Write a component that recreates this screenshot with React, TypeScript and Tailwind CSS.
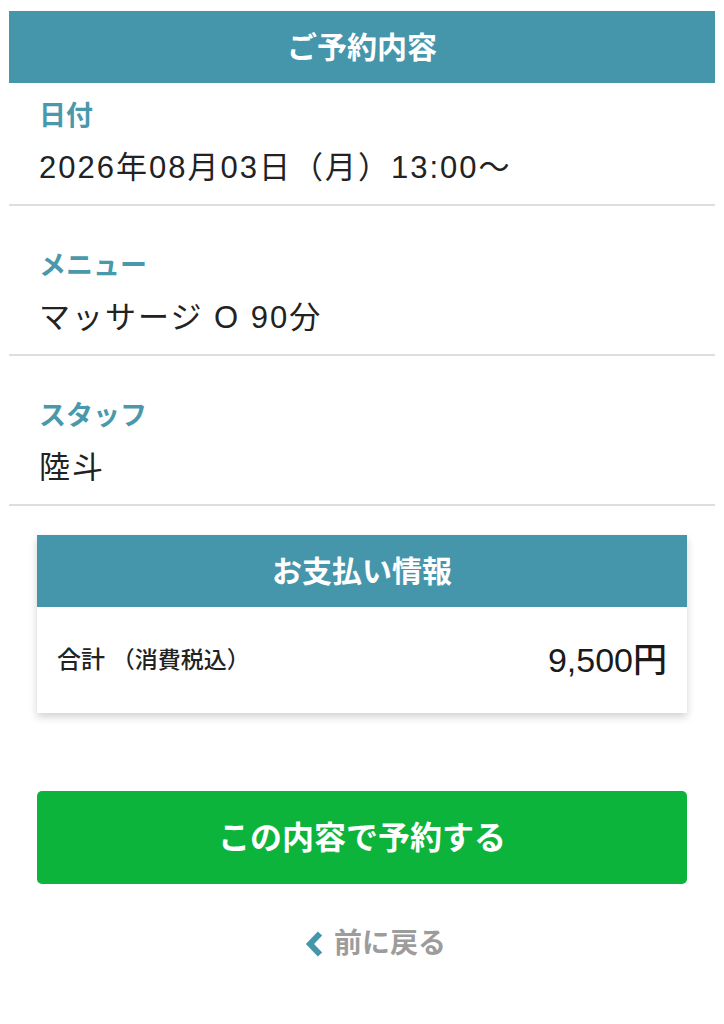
import React from 'react';

const font = { fontFamily: '"Liberation Sans", "Noto Sans CJK JP", sans-serif' };

interface RowProps {
  label: string;
  value: string;
  first?: boolean;
}

const DetailRow: React.FC<RowProps> = ({ label, value, first = false }) => (
  <div className={`border-b-2 border-[#dedede] px-[30px] pb-[14px] ${first ? 'pt-[15px]' : 'pt-[42px]'}`}>
    <div className="text-[27px] leading-[36px] font-bold text-[#4a98ac]">{label}</div>
    <div className="mt-[12px] text-[31px] leading-[44px] tracking-[2px] text-[#222]">{value}</div>
  </div>
);

const App: React.FC = () => {
  return (
    <div className="min-h-[1024px] w-full bg-white pt-[11px]" style={font}>
      <div className="mx-[9px]">
        <div className="flex h-[72px] items-center justify-center bg-[#4596ab] text-[30px] font-bold text-white">
          ご予約内容
        </div>
        <DetailRow first label="日付" value="2026年08月03日（月）13:00〜" />
        <DetailRow label="メニュー" value="マッサージ O 90分" />
        <DetailRow label="スタッフ" value="陸斗" />
      </div>

      <div className="mx-[37px] mt-[29px] shadow-[0_4px_8px_rgba(0,0,0,0.18)]">
        <div className="flex h-[72px] items-center justify-center bg-[#4596ab] text-[30px] font-bold text-white">
          お支払い情報
        </div>
        <div className="flex h-[106px] items-center justify-between bg-white px-[20px]">
          <div className="text-[24px] font-medium text-[#222]">
            合計 <span className="text-[23px]">（消費税込）</span>
          </div>
          <div className="text-[34px] font-medium text-[#1a1a1a]">9,500円</div>
        </div>
      </div>

      <div className="mx-[37px] mt-[78px]">
        <button className="flex h-[93px] w-full items-center justify-center rounded-[5px] bg-[#0cb43c] text-[32px] font-bold text-white">
          この内容で予約する
        </button>
      </div>

      <div className="mt-[40px] flex h-[40px] items-center justify-center gap-[10px] pl-[26px]">
        <svg width="20" height="28" viewBox="0 0 20 28" fill="none">
          <polyline points="16,3.5 6,14 16,24.5" stroke="#4596ab" strokeWidth="6" strokeLinejoin="miter" />
        </svg>
        <span className="text-[28px] font-bold text-[#9c9c9c]">前に戻る</span>
      </div>
    </div>
  );
};

export default App;
